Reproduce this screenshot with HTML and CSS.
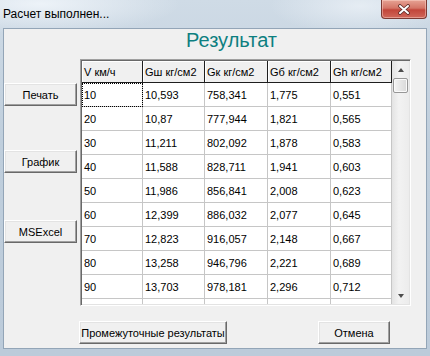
FILE: index.html
```html
<!DOCTYPE html>
<html lang="ru">
  <head>
    <meta charset="UTF-8" />
    <title>Расчет выполнен...</title>
    <link rel="stylesheet" href="styles.css">
  </head>
  <body>
    <div class="window">
      <div class="titlebar">
        <span class="caption">Расчет выполнен...</span>
        <button class="close" aria-label="Закрыть">
          <svg width="14" height="11" viewBox="0 0 14 11">
            <path d="M3 2 L11 9 M11 2 L3 9" stroke="#5a2a26" stroke-width="3.6" stroke-linecap="round" />
            <path d="M3 2 L11 9 M11 2 L3 9" stroke="#fff" stroke-width="2" stroke-linecap="round" />
          </svg>
        </button>
      </div>

      <div class="client">
        <h1 class="heading">Результат</h1>

        <div class="main">
          <div class="side">
            <button class="btn side-btn">Печать</button>
            <button class="btn side-btn chart-btn">График</button>
            <button class="btn side-btn excel-btn">MSExcel</button>
          </div>

          <div class="grid-box">
            <div class="grid">
              <div class="row head">
                <div class="cell">V км/ч</div>
                <div class="cell">Gш кг/см2</div>
                <div class="cell">Gк кг/см2</div>
                <div class="cell">Gб кг/см2</div>
                <div class="cell">Gh кг/см2</div>
              </div>
              <div class="row">
                <div class="cell focus">10</div>
                <div class="cell">10,593</div>
                <div class="cell">758,341</div>
                <div class="cell">1,775</div>
                <div class="cell">0,551</div>
              </div>
              <div class="row">
                <div class="cell">20</div>
                <div class="cell">10,87</div>
                <div class="cell">777,944</div>
                <div class="cell">1,821</div>
                <div class="cell">0,565</div>
              </div>
              <div class="row">
                <div class="cell">30</div>
                <div class="cell">11,211</div>
                <div class="cell">802,092</div>
                <div class="cell">1,878</div>
                <div class="cell">0,583</div>
              </div>
              <div class="row">
                <div class="cell">40</div>
                <div class="cell">11,588</div>
                <div class="cell">828,711</div>
                <div class="cell">1,941</div>
                <div class="cell">0,603</div>
              </div>
              <div class="row">
                <div class="cell">50</div>
                <div class="cell">11,986</div>
                <div class="cell">856,841</div>
                <div class="cell">2,008</div>
                <div class="cell">0,623</div>
              </div>
              <div class="row">
                <div class="cell">60</div>
                <div class="cell">12,399</div>
                <div class="cell">886,032</div>
                <div class="cell">2,077</div>
                <div class="cell">0,645</div>
              </div>
              <div class="row">
                <div class="cell">70</div>
                <div class="cell">12,823</div>
                <div class="cell">916,057</div>
                <div class="cell">2,148</div>
                <div class="cell">0,667</div>
              </div>
              <div class="row">
                <div class="cell">80</div>
                <div class="cell">13,258</div>
                <div class="cell">946,796</div>
                <div class="cell">2,221</div>
                <div class="cell">0,689</div>
              </div>
              <div class="row">
                <div class="cell">90</div>
                <div class="cell">13,703</div>
                <div class="cell">978,181</div>
                <div class="cell">2,296</div>
                <div class="cell">0,712</div>
              </div>
              <!-- next row only peeks in at the bottom edge -->
              <div class="row">
                <div class="cell"></div>
                <div class="cell"></div>
                <div class="cell"></div>
                <div class="cell"></div>
                <div class="cell"></div>
              </div>
            </div>

            <div class="scrollbar">
              <div class="arrow up"></div>
              <div class="track">
                <div class="thumb"></div>
              </div>
              <div class="arrow down"></div>
            </div>
          </div>
        </div>

        <div class="actions">
          <button class="btn interim-btn">Промежуточные результаты</button>
          <button class="btn cancel-btn">Отмена</button>
        </div>
      </div>
    </div>
  </body>
</html>
```

FILE: styles.css
```css
* {
  box-sizing: border-box;
}

body {
  margin: 0;
  width: 430px;
  height: 356px;
  overflow: hidden;
  font-family: "Liberation Sans", Arial, sans-serif;
  font-size: 11px;
  color: #000;
}

/* Window frame (Aero-like glass) */
.window {
  width: 430px;
  height: 356px;
  padding: 0 3px 7px 3px;
  display: flex;
  flex-direction: column;
  background:
    radial-gradient(ellipse 140px 30px at 40px 4px, rgba(240, 245, 250, 0.9), rgba(240, 245, 250, 0) 100%),
    radial-gradient(ellipse 90px 28px at 360px 6px, rgba(235, 241, 247, 0.8), rgba(235, 241, 247, 0) 100%),
    linear-gradient(#cfdbe6, #bfcedc 40%, #bccbda);
}

.titlebar {
  height: 28px;
  display: flex;
  justify-content: space-between;
  align-items: flex-start;
}

.caption {
  margin: 7px 0 0 0;
  font-size: 12px;
  line-height: 14px;
  color: #000;
}

.close {
  width: 46px;
  height: 19px;
  padding: 0;
  margin: 0;
  border: 1px solid #7b3a33;
  border-top: none;
  border-radius: 0 0 4px 4px;
  background: linear-gradient(#e6a394, #d47567 45%, #c2463a 55%, #d0685a);
  box-shadow: inset 0 0 0 1px rgba(255, 220, 210, 0.45);
  display: flex;
  align-items: center;
  justify-content: center;
}

/* Client area */
.client {
  flex: 1;
  background: #f0f0f0;
  border: 1px solid #93a5b7;
  display: flex;
  flex-direction: column;
}

.heading {
  margin: 0 0 8px 0;
  padding-left: 33px;
  font-size: 20px;
  line-height: 22px;
  font-weight: normal;
  text-align: center;
  color: #0d7f80;
}

.main {
  display: flex;
  gap: 3px;
}

.side {
  width: 73px;
  padding-top: 24px;
  display: flex;
  flex-direction: column;
}

/* Classic 3D button */
.btn {
  height: 23px;
  padding: 0;
  font-family: "Liberation Sans", Arial, sans-serif;
  font-size: 11px;
  color: #000;
  background: #f0f0f0;
  border: 1px solid;
  border-color: #fff #696969 #696969 #fff;
  box-shadow: inset -1px -1px 0 #a0a0a0, inset 1px 1px 0 #e3e3e3;
}

.chart-btn {
  margin-top: 44px;
}

.excel-btn {
  margin-top: 47px;
}

/* Table */
.grid-box {
  width: 331px;
  height: 247px;
  display: flex;
  border: 1px solid;
  border-color: #a0a0a0 #fff #fff #a0a0a0;
  box-shadow: inset 1px 1px 0 #696969, inset -1px -1px 0 #e3e3e3;
  padding: 1px;
  overflow: hidden;
}

.grid {
  width: 310px;
  background: #fff;
  overflow: hidden;
}

.row {
  display: grid;
  grid-template-columns: 61px 62px 63px 63px 61px;
  height: 24px;
}

.cell {
  padding-left: 2px;
  border-right: 1px solid #c6c6c6;
  border-bottom: 1px solid #c6c6c6;
  display: flex;
  align-items: center;
  white-space: nowrap;
  overflow: hidden;
}

.head {
  height: 22px;
  background: #f0f0f0;
}

.head .cell {
  border-right: 1px solid #1e1e1e;
  border-bottom: 1px solid #1e1e1e;
  box-shadow: inset 1px 1px 0 #fff;
}

.focus {
  outline: 1px dotted #000;
  outline-offset: -1px;
}

/* Scrollbar */
.scrollbar {
  width: 17px;
  display: flex;
  flex-direction: column;
  background: linear-gradient(90deg, #e3e3e3, #f2f2f2 40%, #ececec);
}

.arrow {
  height: 17px;
  display: flex;
  align-items: center;
  justify-content: center;
}

.arrow::before {
  content: "";
  border-left: 3.5px solid transparent;
  border-right: 3.5px solid transparent;
}

.up::before {
  border-bottom: 4px solid #4d4d4d;
}

.down::before {
  border-top: 4px solid #4d4d4d;
}

.track {
  flex: 1;
  padding: 0 1px;
}

.thumb {
  height: 15px;
  border: 1px solid #979797;
  border-radius: 2px;
  background: linear-gradient(90deg, #f4f4f4, #e6e6e6 50%, #d9d9d9);
  box-shadow: inset 0 0 0 1px #fafafa;
}

/* Bottom buttons */
.actions {
  margin-top: 15px;
  padding-left: 75px;
  display: flex;
  gap: 91px;
}

.interim-btn {
  width: 148px;
}

.cancel-btn {
  width: 72px;
}
```
